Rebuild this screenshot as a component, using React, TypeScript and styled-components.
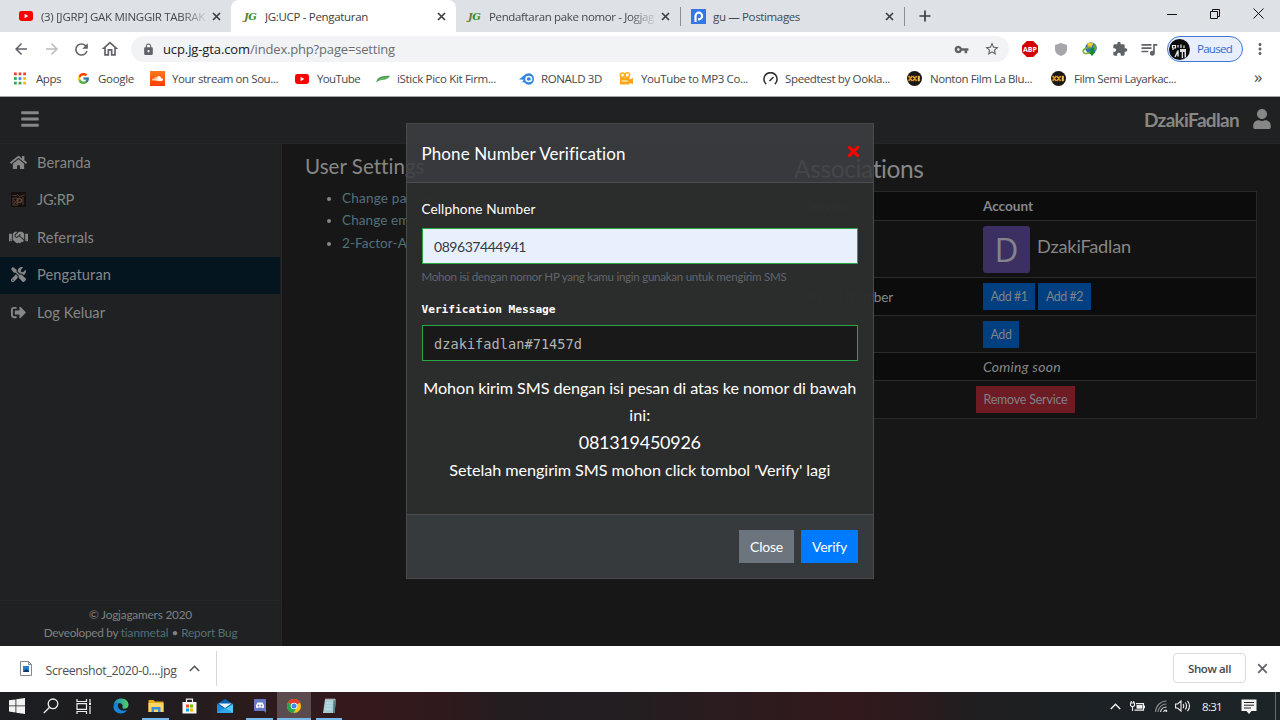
import React, { useLayoutEffect, useRef, useState } from "react";
import styled, { createGlobalStyle, css } from "styled-components";
import { FaBars, FaHome, FaHandshake, FaTools, FaSignOutAlt, FaUser, FaTimes, FaSoundcloud } from "react-icons/fa";
import { MdArrowBack, MdArrowForward, MdRefresh, MdOutlineHome, MdLock, MdVpnKey, MdStarBorder, MdExtension, MdQueueMusic, MdMoreVert } from "react-icons/md";
import { FcGoogle } from "react-icons/fc";

const ui = `"Open Sans", "Noto Sans", sans-serif`;
const body = `Lato, "Liberation Sans", sans-serif`;
const mono = `"DejaVu Sans Mono", "Liberation Mono", monospace`;

const GlobalStyle = createGlobalStyle`
  *, *::before, *::after { box-sizing: border-box; }
  body { margin: 0; background: #171717; overflow: hidden; }
  button, input { font: inherit; }
  svg { display: block; flex: none; }
`;

const FitText = styled.span`
  display: inline-block;
  white-space: pre;
`;

/* Tracks a single line of text out to a given width. */
function Fit({ w, children }: { w: number; children: string }) {
  const ref = useRef<HTMLSpanElement>(null);
  const [spacing, setSpacing] = useState(0);
  useLayoutEffect(() => {
    if (ref.current) {
      setSpacing((w - ref.current.getBoundingClientRect().width) / children.length);
    }
  }, []);
  return <FitText ref={ref} style={{ letterSpacing: spacing }}>{children}</FitText>;
}

const Screen = styled.div`
  display: flex;
  flex-direction: column;
  width: 1280px;
  height: 720px;
  overflow: hidden;
  font-family: ${ui};
`;

/* ---------- browser chrome ---------- */
const TabStrip = styled.div`
  display: flex;
  align-items: stretch;
  height: 32px;
  background: #dee1e6;
`;
const TabItem = styled.div<{ $w: number; $active?: boolean; $pad: number }>`
  display: flex;
  align-items: center;
  flex: none;
  width: ${p => p.$w}px;
  padding: 0 10px 0 ${p => p.$pad}px;
  font-size: 11.5px;
  color: #45484c;
  ${p => p.$active && css`background: #fff; border-radius: 8px 8px 0 0; color: #3c4043;`}
`;
const TabIcon = styled.span`
  display: flex;
  flex: none;
  width: 22px;
`;
const TabTitle = styled.span<{ $fade?: boolean }>`
  flex: 1;
  min-width: 0;
  overflow: hidden;
  white-space: nowrap;
  ${p => p.$fade && css`mask-image: linear-gradient(90deg, #000 82%, transparent 98%);`}
`;
const TabDivider = styled.span`
  width: 1px;
  height: 19px;
  margin-top: 7px;
  background: #8c9095;
`;
const NewTab = styled.span`
  display: flex;
  align-items: center;
  margin-left: 14px;
`;
const WindowButtons = styled.div`
  display: flex;
  align-items: center;
  justify-content: space-between;
  width: 97px;
  height: 27px;
  margin: 0 16px 0 auto;
`;
const Toolbar = styled.div`
  display: flex;
  align-items: center;
  height: 34px;
  padding-left: 12px;
  background: #fff;
  color: #5f6368;
`;
const NavIcon = styled.span<{ $w: number; $dim?: boolean }>`
  display: flex;
  justify-content: center;
  flex: none;
  width: ${p => p.$w}px;
  ${p => p.$dim && css`color: #b9bbbe;`}
`;
const Omnibox = styled.div`
  display: flex;
  align-items: center;
  width: 878px;
  height: 26px;
  padding: 0 9px 0 11px;
  border-radius: 13px;
  background: #f1f3f4;
`;
const Url = styled.div`
  flex: 1;
  margin-left: 8px;
  font-size: 13px;
  line-height: 18px;
  color: #6a6e72;
`;
const Host = styled.span`color: #202124;`;
const OmniIcons = styled.div`
  display: flex;
  align-items: center;
  gap: 15px;
`;
const ProfilePill = styled.div`
  display: flex;
  align-items: center;
  gap: 7px;
  width: 76px;
  height: 26px;
  margin-left: -1px;
  padding-left: 1px;
  border: 1px solid #3c78d8;
  border-radius: 13px;
  background: #e8eefb;
  color: #2f6ad0;
  font-size: 11.5px;
  line-height: 22px;
`;
const Bookmarks = styled.div`
  display: flex;
  align-items: center;
  height: 31px;
  padding: 0 0 5px 14px;
  border-bottom: 1px solid #a4a4a4;
  background: #fff;
  font-size: 11.5px;
  color: #45484c;
`;
const Bookmark = styled.div<{ $w: number; $gap: number }>`
  display: flex;
  align-items: center;
  flex: none;
  gap: ${p => p.$gap}px;
  width: ${p => p.$w}px;
`;
const More = styled.span`
  margin: -3px 0 0 67px;
  font-size: 17px;
  line-height: 14px;
`;

/* ---------- site ---------- */
const Site = styled.div`
  position: relative;
  display: flex;
  flex-direction: column;
  height: 549px;
  background: #171717;
  font-family: ${body};
  color: #878787;
`;
const SiteNav = styled.header`
  display: flex;
  align-items: center;
  justify-content: space-between;
  height: 47px;
  padding: 0 8px 2px 20px;
  border-bottom: 1px solid #252727;
  background: #1f2122;
`;
const UserName = styled.div`
  display: flex;
  align-items: center;
  gap: 13px;
  font-size: 19px;
  font-weight: 700;
`;
const SiteMain = styled.div`
  display: flex;
  flex: 1;
`;
const Sidebar = styled.aside`
  display: flex;
  flex-direction: column;
  width: 282px;
  border-right: 1px solid #252727;
  background: #1f2122;
`;
const MenuItem = styled.div<{ $active?: boolean }>`
  display: flex;
  align-items: center;
  height: 37.5px;
  width: 280px;
  padding-bottom: 0.6px;
  font-size: 14.6px;
  ${p => p.$active && css`background: #05151f;`}
`;
const MenuIcon = styled.span`
  display: flex;
  justify-content: center;
  width: 37px;
`;
const SideFooter = styled.footer`
  height: 46px;
  margin-top: auto;
  padding-top: 5px;
  border-top: 1px solid #252727;
  text-align: center;
  font-size: 11.8px;
  line-height: 18px;
  color: #7f8182;
`;
const Link = styled.span`color: #52707a;`;
const Content = styled.main`
  display: flex;
  flex: 1;
  padding: 9px 23px 0 23px;
`;
const SettingsColumn = styled.section`width: 489px;`;
const SettingsTitle = styled.h2`
  margin: 0;
  font-size: 20.5px;
  font-weight: 400;
  line-height: 27px;
`;
const SettingsList = styled.ul`
  margin: 7px 0 0;
  padding-left: 37px;
  font-size: 13.6px;
  line-height: 22.4px;
`;
const Associations = styled.section`width: 463px;`;
const AssocTitle = styled.h2`
  margin: 0;
  font-size: 24.6px;
  font-weight: 400;
  line-height: 31px;
`;
const Table = styled.div`
  margin-top: 7px;
  border: 1px solid #282a2a;
`;
const Row = styled.div<{ $h: number; $dark?: boolean; $head?: boolean }>`
  display: grid;
  grid-template-columns: 181px 1fr;
  align-items: center;
  height: ${p => p.$h}px;
  background: ${p => (p.$dark ? "#0c0c0c" : "#121212")};
  font-size: 13.6px;
  ${p => p.$head && css`font-weight: 700;`}
  & + & { border-top: 1px solid #2a2c2c; }
`;
const NameCell = styled.div`padding-left: 10px;`;
const AccountCell = styled.div<{ $flush?: boolean }>`
  display: flex;
  align-items: center;
  gap: 3px;
  padding-left: ${p => (p.$flush ? 0 : 7)}px;
`;
const Avatar = styled.span`
  display: flex;
  align-items: center;
  justify-content: center;
  width: 47px;
  height: 47px;
  margin-right: 4px;
  border-radius: 3px;
  background: #3b3061;
  color: #85828c;
  font: 33px ${ui};
`;
const AccountName = styled.span`
  margin-top: -6px;
  font-size: 18.2px;
`;
const SmallButton = styled.button<{ $w: number; $danger?: boolean }>`
  width: ${p => p.$w}px;
  height: 27px;
  padding: 0;
  border: 0;
  background: ${p => (p.$danger ? "#6e1b24" : "#003f80")};
  color: #7e8388;
  font-size: 12.4px;
`;
const Italic = styled.em`font-size: 14px;`;

/* ---------- modal ---------- */
const Modal = styled.div`
  position: absolute;
  left: 406px;
  top: 26px;
  display: flex;
  flex-direction: column;
  width: 468px;
  height: 456px;
  border: 1px solid #484b4c;
  color: #fff;
`;
const ModalHeader = styled.div`
  display: flex;
  justify-content: space-between;
  height: 59px;
  padding: 18px 15px 0 14.5px;
  border-bottom: 1px solid #4b4e50;
  background: rgba(59, 62, 65, 0.89);
  font-size: 17px;
  line-height: 24px;
`;
const CloseMark = styled.span`
  display: flex;
  margin: 1px -4px 0 0;
  color: #f00;
`;
const ModalBody = styled.div`
  display: flex;
  flex-direction: column;
  flex: 1;
  padding: 15px 15px 0 14.5px;
  background: rgba(44, 45, 45, 0.985);
`;
const FieldLabel = styled.label<{ $mono?: boolean }>`
  height: 30px;
  font-size: 13.6px;
  line-height: 23px;
  ${p => p.$mono && css`
    height: 28px;
    font: 700 11.2px/25px ${mono};
  `}
`;
const Field = styled.div<{ $mono?: boolean }>`
  display: flex;
  align-items: center;
  height: 36px;
  padding-left: 11.5px;
  border: 1px solid #28a745;
  background: #e8f0fe;
  color: #333b44;
  font-size: 14px;
  ${p => p.$mono && css`
    background: #191919;
    color: #b4b4b4;
    font: 13.6px ${mono};
    padding-top: 2px;
  `}
`;
const Hint = styled.div`
  height: 33px;
  padding-top: 4px;
  font-size: 11.6px;
  line-height: 17px;
  color: #60666c;
`;
const Instructions = styled.div`
  margin-top: 13px;
  text-align: center;
  font-size: 16.2px;
  line-height: 27px;
`;
const PhoneNumber = styled.div`
  font-size: 18px;
  line-height: 28px;
`;
const ModalFooter = styled.div`
  display: flex;
  justify-content: flex-end;
  gap: 7px;
  height: 64px;
  padding: 15px;
  border-top: 1px solid #4b4e50;
  background: #373a3c;
`;
const ModalButton = styled.button<{ $w: number; $primary?: boolean }>`
  width: ${p => p.$w}px;
  height: 33px;
  padding: 0;
  border: 0;
  background: ${p => (p.$primary ? "#007bff" : "#6c757d")};
  color: #fff;
  font-size: 14px;
`;

/* ---------- downloads and taskbar ---------- */
const DownloadBar = styled.div`
  display: flex;
  align-items: center;
  height: 46px;
  padding: 0 12px 1px 20px;
  background: #fff;
  font-size: 12.3px;
  color: #4c4f52;
`;
const DownloadItem = styled.div`
  display: flex;
  align-items: center;
  width: 197px;
  height: 35px;
  border-right: 1px solid #d6d7d9;
`;
const FileName = styled.span`margin: 3px 12px 0 13.5px;`;
const ShowAll = styled.button`
  width: 73px;
  height: 30px;
  margin: -1px 11px 0 auto;
  padding: 0;
  border: 1px solid #dadce0;
  border-radius: 4px;
  background: #fff;
  color: #45484c;
  font-size: 11.5px;
  font-weight: 600;
`;
const Taskbar = styled.div`
  display: flex;
  height: 28px;
  background: linear-gradient(90deg, #1c1e21 0, #1f1d20 150px, #2b1b1d 250px, #34191c 350px, #30191c 440px, #231d20 510px, #221e21 620px, #2b1c1f 720px, #32191c 850px, #2a1b1e 920px, #1f1e20 980px, #1b2124 1100px, #1d2427 1280px);
`;
const Task = styled.div<{ $w: number; $open?: boolean; $active?: boolean }>`
  display: flex;
  align-items: center;
  justify-content: center;
  flex: none;
  width: ${p => p.$w}px;
  ${p => p.$active && css`background: #5b4b4e;`}
  ${p => p.$open && css`box-shadow: inset 0 -2px #76b9ed;`}
`;
const TaskGap = styled.span<{ $w: number }>`width: ${p => p.$w}px;`;
const Tray = styled.div`
  display: flex;
  align-items: center;
  margin-left: auto;
  color: #eee;
  font-size: 11.5px;
`;
const TrayItem = styled.span<{ $w: number }>`
  display: flex;
  justify-content: center;
  width: ${p => p.$w}px;
`;
const DesktopEdge = styled.span`
  width: 5px;
  height: 28px;
  border-left: 1px solid #66696b;
`;

/* ---------- drawings ---------- */
const CrossIcon = ({ size = 9, color = "#3c4043", weight = 1.7 }) => (
  <svg width={size} height={size} viewBox="0 0 9 9"><path d="m1 1 7 7m0-7-7 7" stroke={color} strokeWidth={weight} /></svg>
);
const PlusIcon = () => <svg width="12" height="12" viewBox="0 0 12 12"><path d="M6 .5v11M.5 6h11" stroke="#3c4043" strokeWidth="1.7" /></svg>;
const YouTubeIcon = () => (
  <svg width="14" height="10" viewBox="0 0 14 10"><rect width="14" height="10" rx="2.4" fill="#f00" /><path d="M5.6 2.8v4.4L9.3 5z" fill="#fff" /></svg>
);
const LogoText = styled.span`
  margin-left: 1px;
  font: italic 700 10px "DejaVu Serif", serif;
  letter-spacing: -0.6px;
  color: #6b7a35;
  b { color: #289128; }
`;
const JgLogo = () => <LogoText>J<b>G</b></LogoText>;
const PostIcon = () => (
  <svg width="15" height="15" viewBox="0 0 15 15"><rect width="15" height="15" fill="#3276e8" /><path d="M4.5 13V7a3.3 3.3 0 1 1 3.3 3.3H7" fill="none" stroke="#fff" strokeWidth="2.2" /></svg>
);
const AppsIcon = () => {
  const c = ["#ea4335", "#ea4335", "#ea4335", "#34a853", "#4285f4", "#fbbc04", "#34a853", "#34a853", "#fbbc04"];
  return <svg width="12" height="13" viewBox="0 0 13 13">{c.map((f, i) => <rect key={i} x={(i % 3) * 5} y={Math.floor(i / 3) * 5} width="3" height="3" fill={f} />)}</svg>;
};
const CloudBox = styled.span`
  display: flex;
  align-items: center;
  justify-content: center;
  width: 15px;
  height: 15px;
  background: linear-gradient(#ff7a1a, #ff3d00);
  color: #fff;
`;
const LeafIcon = () => (
  <svg width="14" height="10" viewBox="0 0 14 10"><path d="M1.5 5Q5 1.500 14 1.800q-2.500 4-7 4Q3 6 0 8.500z" fill="#3d9c50" /><path d="M3 6q4-2 8-2.500" stroke="#8fce7c" fill="none" strokeWidth=".8" /></svg>
);
const RonaldIcon = () => (
  <svg width="15" height="12" viewBox="0 0 15 12"><path d="M0 6.500 5 2.500Q7 .2 10 .2A5 5.700 0 0 1 15 6a5 5.700 0 0 1-5 5.800Q7 11.800 5.500 9.500L3 9l2-2.200z" fill="#2f86dc" /><ellipse cx="9.8" cy="6" rx="2.8" ry="2.5" fill="#2f86dc" stroke="#fff" strokeWidth="1.5" /></svg>
);
const CameraIcon = () => (
  <svg width="14" height="13" viewBox="0 0 14 13"><circle cx="3.5" cy="3.2" r="2.2" fill="none" stroke="#f9b21d" strokeWidth="1.6" /><circle cx="8.3" cy="3" r="2.2" fill="none" stroke="#f9b21d" strokeWidth="1.6" /><path d="M1 5.500h9.500v2L14 6v6l-3.500-1v1.500H1z" fill="#f9a51b" /><path d="M2.500 9h6" stroke="#fff2c5" strokeWidth="1.3" /></svg>
);
const SpeedIcon = () => (
  <svg width="15" height="13" viewBox="0 0 15 13" fill="none" stroke="#303236" strokeWidth="1.6"><path d="M3.200 12.200a6.600 6.600 0 1 1 8.600 0M6.500 9l4-4" /></svg>
);
const XxiIcon = () => (
  <svg width="15" height="15" viewBox="0 0 15 15"><circle cx="7.5" cy="7.5" r="7.5" fill="#1b1714" /><path d="m1.500 5 3.700 5M5.200 5 1.500 10m4.400-5 3.700 5m0-5-3.700 5" stroke="#e0921f" strokeWidth="1.7" /><path d="M11.800 4.800v5.400" stroke="#ecc957" strokeWidth="2" /></svg>
);
const AbpLabel = styled.span`
  display: flex;
  align-items: center;
  justify-content: center;
  width: 16px;
  height: 16px;
  clip-path: polygon(30% 0, 70% 0, 100% 30%, 100% 70%, 70% 100%, 30% 100%, 0 70%, 0 30%);
  background: #d40000;
  color: #fff;
  font: 700 7px ${ui};
`;
const ShieldIcon = () => <svg width="12" height="13" viewBox="0 0 12 13"><path d="m6 0 6 2v4c0 4-3 6-6 7-3-1-6-3-6-7V2z" fill="#a5a7aa" /></svg>;
const IdmIcon = () => (
  <svg width="16" height="14" viewBox="0 0 15 14"><circle cx="8.5" cy="6" r="5.8" fill="#2d70bd" /><path d="M5 1.500Q8 0 11 1L9 5 5 4.500z" fill="#eecb35" /><path d="M12 2q3 3 1 7l-3-4z" fill="#58a73e" /><ellipse cx="5" cy="8.5" rx="4.5" ry="2.6" transform="rotate(-20 5 8.5)" fill="none" stroke="#7dac2e" strokeWidth="1.5" /><path d="M8 6h3v4h2l-3.500 4L6 10h2z" fill="#168a25" /></svg>
);
const ProfileIcon = () => (
  <svg width="21" height="21" viewBox="0 0 21 21"><circle cx="10.5" cy="10.5" r="10.5" fill="#0b0b0b" /><path d="M3.500 9V6.500h3V9H4v2M9 6v2.500M12 5.500V9M15 6.500V9" stroke="#eee" strokeWidth="1.2" fill="none" /><path d="m6 18 3-6.500v6" stroke="#ddd" strokeWidth="1.5" fill="none" /><path d="M11 10h6v8.500h-1.500V13H14v6h-1.300v-6H11z" fill="#ddd" /></svg>
);
const GamePic = () => (
  <svg width="15" height="15" viewBox="0 0 15 15"><rect width="15" height="15" rx="1" fill="#15100e" /><path d="M1.500 3.500h4l1-1 2 2 5-1.500M2 6h4l1 7H2zM12 5v8M3 8l3 4m-3 0 3-4" stroke="#5a3d2e" fill="none" /><circle cx="8.5" cy="8.5" r="2.8" fill="#5c4437" /><circle cx="8.5" cy="8.5" r="1.2" fill="#1e1411" /></svg>
);
const FileIcon = () => (
  <svg width="12" height="15" viewBox="0 0 12 15"><path d="M.5.500h8l3 3v11H.5z" fill="#fff" stroke="#858789" /><path d="M8.500.500v3h3" fill="none" stroke="#858789" /><rect x="3" y="5" width="6" height="6" fill="#2c7bd0" /><path d="m3 11 3-3 3 2v1z" fill="#0f3466" /></svg>
);
const Chevron = () => <svg width="11" height="7" viewBox="0 0 11 7"><path d="m.8 6 4.700-4.700L10.200 6" fill="none" stroke="currentColor" strokeWidth="1.5" /></svg>;
const WindowsIcon = () => <svg width="16" height="16" viewBox="0 0 16 16"><path d="m0 2.300 6.500-.9v6.100H0zM7.300 1.300 16 0v7.500H7.300zM0 8.300h6.500v6.200L0 13.600zM7.300 8.300H16V16l-8.700-1.300z" fill="#f2f2f2" /></svg>;
const SearchIcon = () => <svg width="16" height="16" viewBox="0 0 16 16" fill="none" stroke="#eee" strokeWidth="1.3"><circle cx="10" cy="5.8" r="4.8" /><path d="M6.600 9.200.8 15" /></svg>;
const TaskViewIcon = () => <svg width="16" height="15" viewBox="0 0 16 15" fill="none" stroke="#eee" strokeWidth="1.2"><path d="M1 0v2.500h9.500V0M1 15v-2.500h9.500V15M1 4.600h9.500v5.700H1zM14 0v3m0 4v8" /><path d="M13 3.500h2v2.500h-2z" fill="#eee" stroke="none" /></svg>;
const EdgeIcon = () => (
  <svg width="16" height="16" viewBox="0 0 16 16"><defs><linearGradient id="edge"><stop stopColor="#178bd4" /><stop offset="1" stopColor="#52d160" /></linearGradient></defs><path d="M.5 7C1.500 2.500 4.500.500 8.200.500c4.500 0 7.300 3 7.300 6.200 0 2.600-2 4-4 4-1.600 0-2.500-.6-2-1.500C10.200 7 8.500 5 5.800 5 3 5 1 6 .5 7z" fill="url(#edge)" /><path d="M.5 8C1 5.800 3.500 4.500 6 5.200 4 7 4.500 12 10.500 12.700c1.300 0 2.600-.3 3.500-.7-1.500 2.500-4 3.700-6.500 3.500C3 15.300 0 12 .5 8z" fill="#1684d8" /></svg>
);
const FolderIcon = () => <svg width="16" height="14" viewBox="0 0 16 14"><path d="M.5 1h5l1.500 1.500h8.500V13H.5z" fill="#e8a91f" /><path d="M.5 4h15v9H.5z" fill="#fbd667" /><path d="M3.500 13V8h9v5h-2.500v-2.500H6V13z" fill="#3b90d9" /></svg>;
const StoreIcon = () => <svg width="15" height="16" viewBox="0 0 15 16"><path d="M4.500 4V1.200h6V4" stroke="#eee" fill="none" strokeWidth="1.2" /><path d="M.5 4h14v11.500H.5z" fill="#f5f5f5" /><path d="M4 6.500h3v3H4z" fill="#f25022" /><path d="M8 6.500h3v3H8z" fill="#7fba00" /><path d="M4 10.500h3v3H4z" fill="#00a4ef" /><path d="M8 10.500h3v3H8z" fill="#ffb900" /></svg>;
const MailIcon = () => <svg width="16" height="14" viewBox="0 0 16 14"><path d="m0 5 8-5 8 5v9H0z" fill="#0864b0" /><path d="M1.500 4.500h13L8 9z" fill="#e8f4fc" /><path d="m0 5 8 5-8 4z" fill="#1b8fe0" /><path d="m16 5-8 5 8 4z" fill="#50c8f5" /><path d="m0 14 8-5 8 5z" fill="#2fa9ec" /></svg>;
const DiscordIcon = () => <svg width="12" height="14" viewBox="0 0 12 14"><path d="M1 0h10q1 0 1 1v13l-2-2H1q-1 0-1-1V1q0-1 1-1z" fill="#6679c4" /><path d="M2 8.500Q2 5 3.500 3.500h5Q10 5 10 8.500L8.500 9.300 7.700 8.500H4.300l-.8.8z" fill="#fff" /><circle cx="4.5" cy="6.5" r=".9" fill="#6679c4" /><circle cx="7.5" cy="6.5" r=".9" fill="#6679c4" /></svg>;
const ChromeIcon = () => <svg width="14" height="14" viewBox="0 0 14 14"><circle cx="7" cy="7" r="7" fill="#fbc116" /><path d="M7 7 .94 3.500A7 7 0 0 1 13.060 3.500z" fill="#e33b2e" /><path d="M7 7 .94 3.500A7 7 0 0 0 6.500 14L10 8z" fill="#2ba24c" /><circle cx="7" cy="7" r="3.3" fill="#fff" /><circle cx="7" cy="7" r="2.5" fill="#4285f4" /></svg>;
const NotepadIcon = () => <svg width="15" height="16" viewBox="0 0 14 16"><path d="M2.500 1.500h11L12 15H.5z" fill="#a3cbd2" /><path d="m11 2 2.500-.5L12 15h-1.500z" fill="#4f7980" /><path d="M3 1.500h10" stroke="#e9eff0" strokeWidth="2" strokeDasharray="1 1" /><path d="M3 5h7M2.700 8h7M2.300 11h7" stroke="#c9e6ea" /></svg>;
const PowerIcon = () => <svg width="15" height="11" viewBox="0 0 15 11" fill="none" stroke="#eee" strokeWidth="1.1"><path d="M6 2.600h7.500v6.500H4.500M14.500 4.500V7.200M1.300 0v2M3.700 0v2M.5 2h4v2.500l-1 1H1.500l-1-1zM2.500 5.500v4.500" /><path d="M6.500 4h6v3.700h-6z" fill="#eee" stroke="none" /></svg>;
const WifiIcon = () => <svg width="13" height="12" viewBox="0 0 13 12" fill="none" stroke="#eee" strokeWidth="1.1"><path d="M5.500 12a6 6 0 0 1 6-5M8.500 12a3 3 0 0 1 3-2" /><path d="M.6 12A11 11 0 0 1 11.500 1M3 12a8.500 8.500 0 0 1 8.500-8" stroke="#85898b" /><circle cx="11.3" cy="11" r="1" fill="#eee" stroke="none" /></svg>;
const VolumeIcon = () => <svg width="16" height="14" viewBox="0 0 16 14" fill="none" stroke="#eee" strokeWidth="1.1"><path d="M.6 5v4h2L6 12V2L2.600 5zM8 5q1.500 2 0 4M10.300 3.500q2.500 3.500 0 7M12.500 1.800q4 5.200 0 10.400" /></svg>;
const NoticeIcon = () => <svg width="16" height="15" viewBox="0 0 16 15"><path d="M.5.500h15v11.500H10.500L8 15l-2.500-3H.5z" fill="#f2f2f2" /><path d="M3 3.500h10M3 6.200h10M3 9h7" stroke="#222" /></svg>;

const bookmarks = [
  { icon: <AppsIcon />, text: "Apps", w: 63, gap: 10, tw: 25 },
  { icon: <FcGoogle size={13} />, text: "Google", w: 73, gap: 8, tw: 36 },
  { icon: <CloudBox><FaSoundcloud size={11} /></CloudBox>, text: "Your stream on Sou...", w: 145, gap: 7, tw: 106 },
  { icon: <YouTubeIcon />, text: "YouTube", w: 81, gap: 8, tw: 43 },
  { icon: <LeafIcon />, text: "iStick Pico Kit Firm...", w: 143, gap: 7, tw: 99 },
  { icon: <RonaldIcon />, text: "RONALD 3D", w: 100, gap: 7, tw: 61 },
  { icon: <CameraIcon />, text: "YouTube to MP3 Co...", w: 144, gap: 8, tw: 107 },
  { icon: <SpeedIcon />, text: "Speedtest by Ookla...", w: 144, gap: 7, tw: 105 },
  { icon: <XxiIcon />, text: "Nonton Film La Blu...", w: 144, gap: 8, tw: 102 },
  { icon: <XxiIcon />, text: "Film Semi Layarkac...", w: 136, gap: 8, tw: 102 },
];

const menu = [
  { icon: <FaHome size={17} />, text: "Beranda", w: 54 },
  { icon: <GamePic />, text: "JG:RP", w: 37 },
  { icon: <FaHandshake size={19} />, text: "Referrals", w: 57 },
  { icon: <FaTools size={15} />, text: "Pengaturan", w: 74, active: true },
  { icon: <FaSignOutAlt size={15} />, text: "Log Keluar", w: 68 },
];

export default function App() {
  return (
    <Screen>
      <GlobalStyle />
      <TabStrip>
        <TabItem $w={231} $pad={19}>
          <TabIcon><YouTubeIcon /></TabIcon>
          <TabTitle $fade><Fit w={164}>(3) [JGRP] GAK MINGGIR TABRAK</Fit></TabTitle>
          <CrossIcon />
        </TabItem>
        <TabItem $w={225} $pad={12} $active>
          <TabIcon><JgLogo /></TabIcon>
          <TabTitle><Fit w={103}>JG:UCP - Pengaturan</Fit></TabTitle>
          <CrossIcon />
        </TabItem>
        <TabItem $w={224} $pad={11}>
          <TabIcon><JgLogo /></TabIcon>
          <TabTitle $fade><Fit w={165}>Pendaftaran pake nomor - Jogjag</Fit></TabTitle>
          <CrossIcon />
        </TabItem>
        <TabDivider />
        <TabItem $w={223} $pad={10}>
          <TabIcon><PostIcon /></TabIcon>
          <TabTitle><Fit w={87}>gu — Postimages</Fit></TabTitle>
          <CrossIcon />
        </TabItem>
        <TabDivider />
        <NewTab><PlusIcon /></NewTab>
        <WindowButtons>
          <svg width="10" height="10"><path d="M0 5.500h10" stroke="#111" /></svg>
          <svg width="10" height="10" fill="none" stroke="#111"><path d="M.5 2.500h7v7h-7zM2.500 2.500v-2h7v7h-2" /></svg>
          <svg width="11" height="11" stroke="#111"><path d="m.5.500 10 10m0-10-10 10" /></svg>
        </WindowButtons>
      </TabStrip>
      <Toolbar>
        <NavIcon $w={18}><MdArrowBack size={18} /></NavIcon>
        <NavIcon $w={43} $dim><MdArrowForward size={18} /></NavIcon>
        <NavIcon $w={16}><MdRefresh size={19} /></NavIcon>
        <NavIcon $w={42}><MdOutlineHome size={20} /></NavIcon>
        <Omnibox>
          <MdLock size={13} />
          <Url><Host><Fit w={87}>ucp.jg-gta.com</Fit></Host><Fit w={145}>/index.php?page=setting</Fit></Url>
          <OmniIcons><MdVpnKey size={15} /><MdStarBorder size={16} /></OmniIcons>
        </Omnibox>
        <NavIcon $w={42}><AbpLabel>ABP</AbpLabel></NavIcon>
        <NavIcon $w={19}><ShieldIcon /></NavIcon>
        <NavIcon $w={40}><IdmIcon /></NavIcon>
        <NavIcon $w={20}><MdExtension size={16} /></NavIcon>
        <NavIcon $w={38}><MdQueueMusic size={20} /></NavIcon>
        <ProfilePill><ProfileIcon /><Fit w={35}>Paused</Fit></ProfilePill>
        <NavIcon $w={33}><MdMoreVert size={18} /></NavIcon>
      </Toolbar>
      <Bookmarks>
        {bookmarks.map(b => (
          <Bookmark key={b.text} $w={b.w} $gap={b.gap}>{b.icon}<Fit w={b.tw}>{b.text}</Fit></Bookmark>
        ))}
        <More>»</More>
      </Bookmarks>

      <Site>
        <SiteNav>
          <FaBars size={20} />
          <UserName><Fit w={95}>DzakiFadlan</Fit><FaUser size={20} /></UserName>
        </SiteNav>
        <SiteMain>
          <Sidebar>
            {menu.map(m => (
              <MenuItem key={m.text} $active={m.active}><MenuIcon>{m.icon}</MenuIcon><Fit w={m.w}>{m.text}</Fit></MenuItem>
            ))}
            <SideFooter>
              <div><Fit w={103}>© Jogjagamers 2020</Fit></div>
              <div><Fit w={77}>Deveoloped by </Fit><Link><Fit w={48}>tianmetal</Fit></Link> • <Link><Fit w={56}>Report Bug</Fit></Link></div>
            </SideFooter>
          </Sidebar>
          <Content>
            <SettingsColumn>
              <SettingsTitle><Fit w={119}>User Settings</Fit></SettingsTitle>
              <SettingsList>
                <li><Link><Fit w={108}>Change password</Fit></Link></li>
                <li><Link><Fit w={81}>Change email</Fit></Link></li>
                <li><Link><Fit w={85}>2-Factor-Auth</Fit></Link></li>
              </SettingsList>
            </SettingsColumn>
            <Associations>
              <AssocTitle><Fit w={130}>Associations</Fit></AssocTitle>
              <Table>
                <Row $h={28} $dark $head><NameCell>Service</NameCell><AccountCell><Fit w={50}>Account</Fit></AccountCell></Row>
                <Row $h={57}><NameCell /><AccountCell><Avatar>D</Avatar><AccountName><Fit w={94}>DzakiFadlan</Fit></AccountName></AccountCell></Row>
                <Row $h={38} $dark><NameCell><Fit w={88}>Phone Number</Fit></NameCell><AccountCell><SmallButton $w={52}><Fit w={37}>Add #1</Fit></SmallButton><SmallButton $w={53}><Fit w={37}>Add #2</Fit></SmallButton></AccountCell></Row>
                <Row $h={37}><NameCell /><AccountCell><SmallButton $w={36}><Fit w={21}>Add</Fit></SmallButton></AccountCell></Row>
                <Row $h={28} $dark><NameCell /><AccountCell><Italic><Fit w={78}>Coming soon</Fit></Italic></AccountCell></Row>
                <Row $h={38}><NameCell /><AccountCell $flush><SmallButton $w={99} $danger><Fit w={84}>Remove Service</Fit></SmallButton></AccountCell></Row>
              </Table>
            </Associations>
          </Content>
        </SiteMain>

        <Modal>
          <ModalHeader>
            <Fit w={204}>Phone Number Verification</Fit>
            <CloseMark><FaTimes size={17} /></CloseMark>
          </ModalHeader>
          <ModalBody>
            <FieldLabel><Fit w={114}>Cellphone Number</Fit></FieldLabel>
            <Field><Fit w={92}>089637444941</Fit></Field>
            <Hint><Fit w={365}>Mohon isi dengan nomor HP yang kamu ingin gunakan untuk mengirim SMS</Fit></Hint>
            <FieldLabel $mono><Fit w={134}>Verification Message</Fit></FieldLabel>
            <Field $mono><Fit w={148}>dzakifadlan#71457d</Fit></Field>
            <Instructions>
              <div><Fit w={433}>Mohon kirim SMS dengan isi pesan di atas ke nomor di bawah</Fit></div>
              <div><Fit w={21}>ini:</Fit></div>
              <PhoneNumber><Fit w={122}>081319450926</Fit></PhoneNumber>
              <div><Fit w={381}>Setelah mengirim SMS mohon click tombol 'Verify' lagi</Fit></div>
            </Instructions>
          </ModalBody>
          <ModalFooter>
            <ModalButton $w={55}><Fit w={33}>Close</Fit></ModalButton>
            <ModalButton $w={57} $primary><Fit w={35}>Verify</Fit></ModalButton>
          </ModalFooter>
        </Modal>
      </Site>

      <DownloadBar>
        <DownloadItem><FileIcon /><FileName><Fit w={131}>Screenshot_2020-0....jpg</Fit></FileName><Chevron /></DownloadItem>
        <ShowAll><Fit w={43}>Show all</Fit></ShowAll>
        <CrossIcon size={11} color="#5f6368" weight={1.4} />
      </DownloadBar>
      <Taskbar>
        <Task $w={34}><WindowsIcon /></Task>
        <Task $w={33}><SearchIcon /></Task>
        <Task $w={34}><TaskViewIcon /></Task>
        <Task $w={40}><EdgeIcon /></Task>
        <TaskGap $w={1} />
        <Task $w={27} $open><FolderIcon /></Task>
        <Task $w={41}><StoreIcon /></Task>
        <Task $w={29}><MailIcon /></Task>
        <TaskGap $w={7} />
        <Task $w={27} $open><DiscordIcon /></Task>
        <TaskGap $w={4} />
        <Task $w={34} $open $active><ChromeIcon /></Task>
        <TaskGap $w={5} />
        <Task $w={26} $open><NotepadIcon /></Task>
        <Tray>
          <TrayItem $w={22}><Chevron /></TrayItem>
          <TrayItem $w={23}><PowerIcon /></TrayItem>
          <TrayItem $w={25}><WifiIcon /></TrayItem>
          <TrayItem $w={17}><VolumeIcon /></TrayItem>
          <TrayItem $w={42}><Fit w={20}>8:31</Fit></TrayItem>
          <TrayItem $w={32}><NoticeIcon /></TrayItem>
          <TaskGap $w={10} />
          <DesktopEdge />
        </Tray>
      </Taskbar>
    </Screen>
  );
}
